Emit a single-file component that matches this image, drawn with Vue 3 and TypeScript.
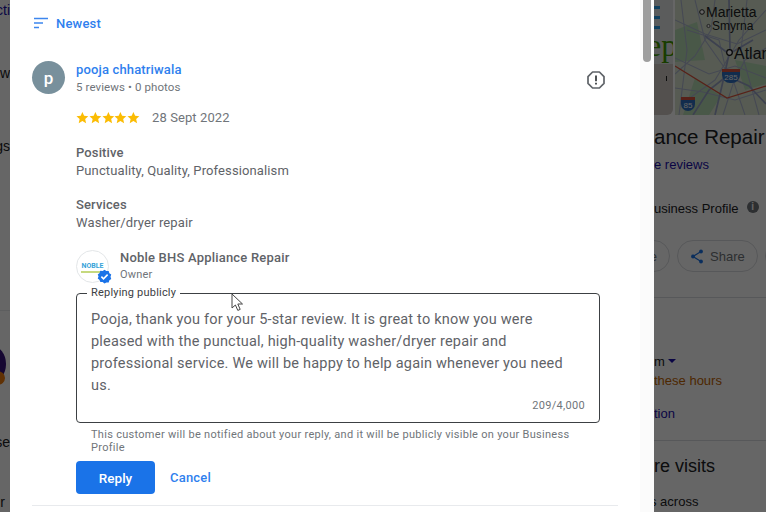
<script setup lang="ts">
const stars = [1, 2, 3, 4, 5];
const replyText =
  'Pooja, thank you for your 5-star review. It is great to know you were pleased with the punctual, high-quality washer/dryer repair and professional service. We will be happy to help again whenever you need us.';
</script>

<template>
  <div class="page">
    <div class="behind behind-left">
      <span class="frag frag-link">cti</span>
      <span class="frag frag-ew">ew</span>
      <span class="frag frag-gs">gs</span>
      <hr class="frag-line" />
      <div class="frag-logo"></div>
      <div class="frag-logo-tip"></div>
      <span class="frag frag-se">se</span>
      <span class="frag frag-r">r</span>
    </div>

    <main class="panel">
      <div class="scrollbar"><div class="thumb"></div></div>

      <button class="sort">
        <svg width="16" height="12" viewBox="0 0 16 12">
          <path d="M1 1.500h14M1 6h9M1 10.500h5" stroke="#3d86ee" stroke-width="1.600" fill="none" />
        </svg>
        Newest
      </button>

      <section class="review">
        <div class="reviewer">
          <div class="avatar">p</div>
          <div class="who">
            <a class="name">pooja chhatriwala</a>
            <div class="stats">5 reviews • 0 photos</div>
          </div>
          <svg class="flag" width="20" height="20" viewBox="0 0 20 20">
            <path d="M6.600 2h6.800L18 6.600v6.800L13.400 18H6.600L2 13.400V6.600z" fill="none" stroke="#5f6368" stroke-width="1.700" stroke-linejoin="round" />
            <path d="M10 5.600v5.600M10 12.800v1.700" stroke="#3c4043" stroke-width="1.800" />
          </svg>
        </div>

        <div class="body">
          <div class="rating">
            <span class="stars">
              <svg v-for="s in stars" :key="s" width="13" height="13" viewBox="0 0 24 24">
                <path d="M12 1.500l3.200 7.300 7.900.8-5.900 5.300 1.700 7.800L12 18.700l-6.900 4 1.700-7.800-5.900-5.300 7.900-.8z" fill="#fbbc04" />
              </svg>
            </span>
            <span class="date">28 Sept 2022</span>
          </div>

          <div class="attr attr-first">
            <div class="attr-title">Positive</div>
            <div>Punctuality, Quality, Professionalism</div>
          </div>
          <div class="attr">
            <div class="attr-title">Services</div>
            <div>Washer/dryer repair</div>
          </div>

          <div class="owner">
            <div class="owner-logo">
              <span class="noble">NOBLE</span>
              <span class="noble-sub"></span>
              <svg class="verified" width="15" height="15" viewBox="0 0 24 24">
                <path d="M12 1l3 2.200 3.700-.1 1.100 3.500 3 2.200-1.200 3.500 1.200 3.500-3 2.200-1.100 3.500-3.700-.1L12 23l-3-2.200-3.700.1-1.100-3.500-3-2.200L2.400 12 1.200 8.600l3-2.200 1.100-3.500 3.700.1z" fill="#1a73e8" />
                <path d="M7 12.300l3.400 3.400L17 9" fill="none" stroke="#fff" stroke-width="2.600" />
              </svg>
            </div>
            <div>
              <div class="owner-name">Noble BHS Appliance Repair</div>
              <div class="owner-role">Owner</div>
            </div>
          </div>

          <fieldset class="reply-box">
            <legend>Replying publicly</legend>
            <p class="reply-text">{{ replyText }}</p>
            <div class="counter">209/4,000</div>
          </fieldset>

          <p class="notice">
            This customer will be notified about your reply, and it will be publicly visible on your Business Profile
          </p>

          <div class="actions">
            <button class="btn-reply">Reply</button>
            <button class="btn-cancel">Cancel</button>
          </div>
        </div>
      </section>

      <hr class="sep" />

      <svg class="cursor" width="13" height="19" viewBox="0 0 13 19">
        <path d="M1 1v14l3.400-3 2.400 5.400 2.400-1-2.400-5.400H11.500z" fill="#fff" stroke="#444" stroke-width="1" />
      </svg>
    </main>

    <aside class="behind behind-right">
      <div class="media">
        <div class="photo">
          <div class="photo-top">
            <i class="mark"></i>
            <i class="mark"></i>
            <i class="mark"></i>
          </div>
          <span class="photo-word">epa</span>
          <i class="tick"></i>
        </div>
        <div class="map">
          <svg width="91" height="115" viewBox="0 0 91 115">
            <rect width="91" height="115" fill="#d9e4cf" />
            <path d="M0 30L22 22L30 60L0 62z" fill="#b7dcb5" />
            <path d="M60 60L91 66V84L70 90z" fill="#b7dcb5" />
            <path d="M20 78L46 96L34 115H8z" fill="#b7dcb5" />
            <g fill="none" stroke="#aeb6d0" stroke-width="1.100">
              <path d="M0 20L30 34L62 44L91 30" />
              <path d="M20 0L30 40L58 80L70 115" />
              <path d="M0 58L34 74L60 66L91 78" />
              <path d="M91 10L64 40L40 80L12 100" />
              <path d="M0 88L28 92L60 100L91 90" />
              <path d="M72 0L66 50L84 115" />
              <path d="M6 0L12 50L4 115" />
              <path d="M40 0L36 30L20 56L0 74" />
              <path d="M91 48L70 60L58 84L48 115" />
              <path d="M12 30L44 40L50 66" />
            </g>
            <g fill="none" stroke="#98a2c6" stroke-width="1.700">
              <path d="M54 0L55 50L46 90L40 115" />
              <path d="M18 115L34 90L52 76L74 86L91 104" />
              <path d="M30 36L54 54L78 40" />
            </g>
            <path d="M0 66L52 98L91 86" fill="none" stroke="#d9533c" stroke-width="1.200" />
            <circle cx="27" cy="12" r="2.300" fill="#fff" stroke="#222" />
            <circle cx="33.500" cy="26" r="1.600" fill="#fff" stroke="#555" />
            <circle cx="54.500" cy="52.500" r="2.800" fill="#fff" stroke="#111" stroke-width="1.200" />
          </svg>
          <span class="city city-marietta">Marietta</span>
          <span class="city city-smyrna">Smyrna</span>
          <span class="city city-atlanta">Atlanta</span>
          <span class="shield shield-285">285</span>
          <span class="shield shield-85">85</span>
        </div>
      </div>

      <h2 class="biz-title">ance Repair</h2>
      <a class="biz-link">e reviews</a>
      <div class="biz-profile">
        usiness Profile
        <span class="info">i</span>
      </div>
      <div class="biz-buttons">
        <span class="pill pill-cut">e</span>
        <span class="pill pill-share">
          <svg width="14" height="15" viewBox="0 0 14 15">
            <path d="M11 2.500L3 7.500l8 5" fill="none" stroke="#1a73e8" stroke-width="1.200" />
            <circle cx="11" cy="2.500" r="1.900" fill="#1a73e8" />
            <circle cx="3" cy="7.500" r="1.900" fill="#1a73e8" />
            <circle cx="11" cy="12.500" r="1.900" fill="#1a73e8" />
          </svg>
          Share
        </span>
        <span class="pill pill-next"></span>
      </div>
      <hr class="biz-line" />
      <div class="hours">m<span class="caret"></span></div>
      <div class="hours-warn">these hours</div>
      <a class="biz-link tion">tion</a>
      <hr class="biz-line line-two" />
      <h3 class="visits">re visits</h3>
      <div class="across">s across</div>
    </aside>
  </div>
</template>

<style scoped>
.page {
  display: flex;
  width: 766px;
  height: 512px;
  overflow: hidden;
  font-family: Roboto, "Liberation Sans", sans-serif;
}

.behind {
  position: relative;
  overflow: hidden;
  background: #fff;
  font-family: "Liberation Sans", Arial, sans-serif;
  color: #202124;
}

.behind::after {
  content: "";
  position: absolute;
  inset: 0;
  background: rgba(0, 0, 0, 0.6);
}

.behind-left {
  width: 10px;
  flex: none;
  font-size: 14px;
}

.frag {
  position: absolute;
  right: 0;
  white-space: nowrap;
}

.frag-link {
  top: 2px;
  color: #1a0dab;
}

.frag-ew {
  top: 65px;
}

.frag-gs {
  top: 138px;
}

.frag-se {
  top: 434px;
}

.frag-r {
  top: 494px;
  right: 5px;
}

.frag-line {
  position: absolute;
  top: 310px;
  left: 0;
  width: 100%;
  margin: 0;
  border: 0;
  border-top: 1px solid #e8eaed;
}

.frag-logo {
  position: absolute;
  left: -22px;
  top: 346px;
  width: 28px;
  height: 36px;
  border-radius: 50%;
  background: #35107a;
}

.frag-logo-tip {
  position: absolute;
  left: -10px;
  top: 371px;
  width: 15px;
  height: 14px;
  border-radius: 50%;
  background: #f07a0a;
}

.panel {
  position: relative;
  flex: none;
  width: 644px;
  height: 512px;
  overflow: hidden;
  background: #fff;
  color: #5f6368;
  font-size: 13px;
  padding: 0 36px 0 22px;
  box-sizing: border-box;
}

.scrollbar {
  position: absolute;
  top: 0;
  right: 0;
  width: 14px;
  height: 100%;
  background: #fbfbfb;
}

.thumb {
  width: 8px;
  height: 62px;
  margin-left: 3px;
  border-radius: 0 0 4px 4px;
  background: #9e9e9e;
}

.sort {
  display: flex;
  align-items: center;
  gap: 7px;
  height: 24px;
  margin-top: 11px;
  padding: 0 0 0 1px;
  border: 0;
  background: none;
  color: #2f7fee;
  font: 500 13px Roboto, sans-serif;
  letter-spacing: 0.2px;
}

.review {
  margin-top: 26px;
}

.reviewer {
  display: flex;
  align-items: flex-start;
}

.avatar {
  display: flex;
  align-items: center;
  justify-content: center;
  width: 33px;
  height: 33px;
  border-radius: 50%;
  background: #78909c;
  color: #fff;
  font-size: 17px;
  font-weight: 500;
  flex: none;
}

.who {
  margin-left: 11px;
}

.name {
  display: block;
  color: #2f7fee;
  font-weight: 500;
  font-size: 13px;
  line-height: 18px;
  letter-spacing: 0.15px;
}

.stats {
  color: #70757a;
  font-size: 11.500px;
  line-height: 16px;
  letter-spacing: 0.1px;
}

.flag {
  margin-left: auto;
  margin-top: 9px;
  margin-right: 12px;
}

.body {
  margin-left: 44px;
}

.rating {
  display: flex;
  align-items: center;
  margin-top: 13px;
  height: 18px;
}

.stars {
  display: flex;
  width: 64px;
}

.date {
  margin-left: 12px;
  color: #70757a;
  letter-spacing: 0.1px;
}

.attr {
  margin-top: 16px;
  line-height: 18px;
  letter-spacing: 0.12px;
}

.attr-first {
  margin-top: 18px;
}

.attr-title {
  font-weight: 500;
}

.owner {
  display: flex;
  align-items: center;
  gap: 11px;
  margin-top: 17px;
}

.owner-logo {
  position: relative;
  width: 33px;
  height: 33px;
  border: 1px solid #e3e6e8;
  border-radius: 50%;
  box-sizing: border-box;
  text-align: center;
  background: #fff;
}

.noble {
  display: block;
  margin-top: 11px;
  font-size: 7px;
  line-height: 8px;
  font-weight: 700;
  color: #36a3d9;
}

.noble-sub {
  display: block;
  height: 2px;
  margin: 1px 4px;
  background: #c6d97e;
}

.verified {
  position: absolute;
  right: -4px;
  bottom: -2px;
}

.owner-name {
  font-size: 13px;
  font-weight: 500;
  line-height: 18px;
  letter-spacing: 0.2px;
}

.owner-role {
  color: #70757a;
  font-size: 11px;
  line-height: 16px;
  letter-spacing: 0.2px;
}

.reply-box {
  margin: 3px 0 0;
  padding: 0 14px 10px;
  height: 137px;
  width: 524px;
  box-sizing: border-box;
  border: 1px solid #3c4043;
  border-radius: 4px;
  min-width: 0;
}

legend {
  padding: 0 4px;
  margin-left: -4px;
  font-size: 11px;
  line-height: 14px;
  letter-spacing: 0.2px;
  color: #3c4043;
}

.reply-text {
  margin: 9px 0 0;
  font-size: 14.500px;
  line-height: 22px;
  letter-spacing: 0.2px;
}

.counter {
  margin-top: 2px;
  text-align: right;
  color: #70757a;
  font-size: 11px;
  letter-spacing: 0.3px;
}

.notice {
  margin: 5px 0 0 15px;
  width: 500px;
  color: #70757a;
  font-size: 11px;
  line-height: 13px;
  letter-spacing: 0.29px;
}

.actions {
  display: flex;
  align-items: center;
  margin-top: 7px;
}

.btn-reply {
  width: 79px;
  height: 33px;
  border: 0;
  border-radius: 4px;
  background: #1a73e8;
  color: #fff;
  font: 500 13.500px Roboto, sans-serif;
}

.btn-cancel {
  margin-left: 15px;
  padding: 0;
  border: 0;
  background: none;
  color: #2f7fee;
  font: 500 13px Roboto, sans-serif;
  letter-spacing: 0.2px;
}

.sep {
  width: 586px;
  margin: 11px 0 0 0;
  border: 0;
  border-top: 1px solid #e8eaed;
}

.cursor {
  position: absolute;
  left: 221px;
  top: 293px;
}

.behind-right {
  flex: 1;
  min-width: 0;
  white-space: nowrap;
}

.media {
  display: flex;
  gap: 2px;
  height: 115px;
}

.photo {
  position: relative;
  width: 19px;
  overflow: hidden;
  background: #cfc9c2;
  border-radius: 0 0 6px 0;
  flex: none;
}

.photo-top {
  display: flex;
  flex-direction: column;
  gap: 7px;
  height: 64px;
  padding-top: 6px;
  box-sizing: border-box;
  background: #e4e6e6;
}

.mark {
  display: block;
  width: 6px;
  height: 3px;
  background: #2a9fe8;
}

.photo-word {
  position: absolute;
  left: -7px;
  top: 27px;
  font-family: "Liberation Serif", serif;
  font-size: 32px;
  color: #3f9a00;
}

.tick {
  position: absolute;
  left: 12px;
  top: 76px;
  width: 1px;
  height: 5px;
  background: #222;
}

.map {
  position: relative;
  flex: 1;
  overflow: hidden;
}

.map svg {
  display: block;
}

.city {
  position: absolute;
  color: #202124;
  line-height: 1;
}

.city-marietta {
  left: 31px;
  top: 5px;
  font-size: 14px;
}

.city-smyrna {
  left: 37px;
  top: 20px;
  font-size: 12px;
}

.city-atlanta {
  left: 59px;
  top: 46px;
  font-size: 16px;
}

.shield {
  position: absolute;
  width: 18px;
  text-align: center;
  background: #2e6fc0;
  border-top: 3px solid #d9533c;
  border-radius: 0 0 8px 8px;
  color: #fff;
  font-size: 8px;
  line-height: 11px;
}

.shield-285 {
  left: 47px;
  top: 69px;
}

.shield-85 {
  left: 6px;
  top: 97px;
  width: 14px;
}

.biz-title {
  margin: 9px 0 0;
  font-size: 20.500px;
  line-height: 26px;
  font-weight: 400;
}

.biz-link {
  display: block;
  margin-top: 6px;
  color: #1a0dab;
  font-size: 13px;
  line-height: 18px;
}

.biz-profile {
  display: flex;
  align-items: center;
  margin-top: 26px;
  font-size: 13px;
  line-height: 18px;
}

.info {
  width: 12px;
  height: 12px;
  margin: -4px 0 0 8px;
  border-radius: 50%;
  background: #70757a;
  color: #fff;
  font-size: 10px;
  line-height: 12px;
  font-weight: 700;
  text-align: center;
}

.biz-buttons {
  display: flex;
  gap: 7px;
  margin-top: 22px;
  margin-left: -30px;
}

.pill {
  display: flex;
  align-items: center;
  gap: 6px;
  height: 30px;
  padding: 0 12px;
  border: 1px solid #dadce0;
  border-radius: 17px;
  color: #70757a;
  font-size: 13px;
  box-sizing: content-box;
  flex: none;
}

.pill-cut {
  width: 20px;
  justify-content: flex-end;
}

.pill-share {
  width: 55px;
}

.pill-next {
  width: 20px;
}

.biz-line {
  margin: 25px 0 0;
  border: 0;
  border-top: 1px solid #dadce0;
}

.hours {
  margin-top: 55px;
  font-size: 13px;
  line-height: 18px;
}

.caret {
  display: inline-block;
  margin: 0 0 3px 3px;
  border: 4px solid transparent;
  border-top-color: #1a0dab;
  border-bottom: 0;
}

.hours-warn {
  margin-top: 1px;
  color: #c26401;
  font-size: 13px;
  line-height: 18px;
}

.tion {
  margin-top: 15px;
}

.line-two {
  margin-top: 17px;
}

.visits {
  margin: 13px 0 0;
  font-size: 18px;
  line-height: 24px;
  font-weight: 400;
}

.across {
  margin-top: 15px;
  margin-left: -4px;
  font-size: 13px;
  line-height: 18px;
}
</style>

<style>
html,
body {
  margin: 0;
  overflow: hidden;
}
</style>
